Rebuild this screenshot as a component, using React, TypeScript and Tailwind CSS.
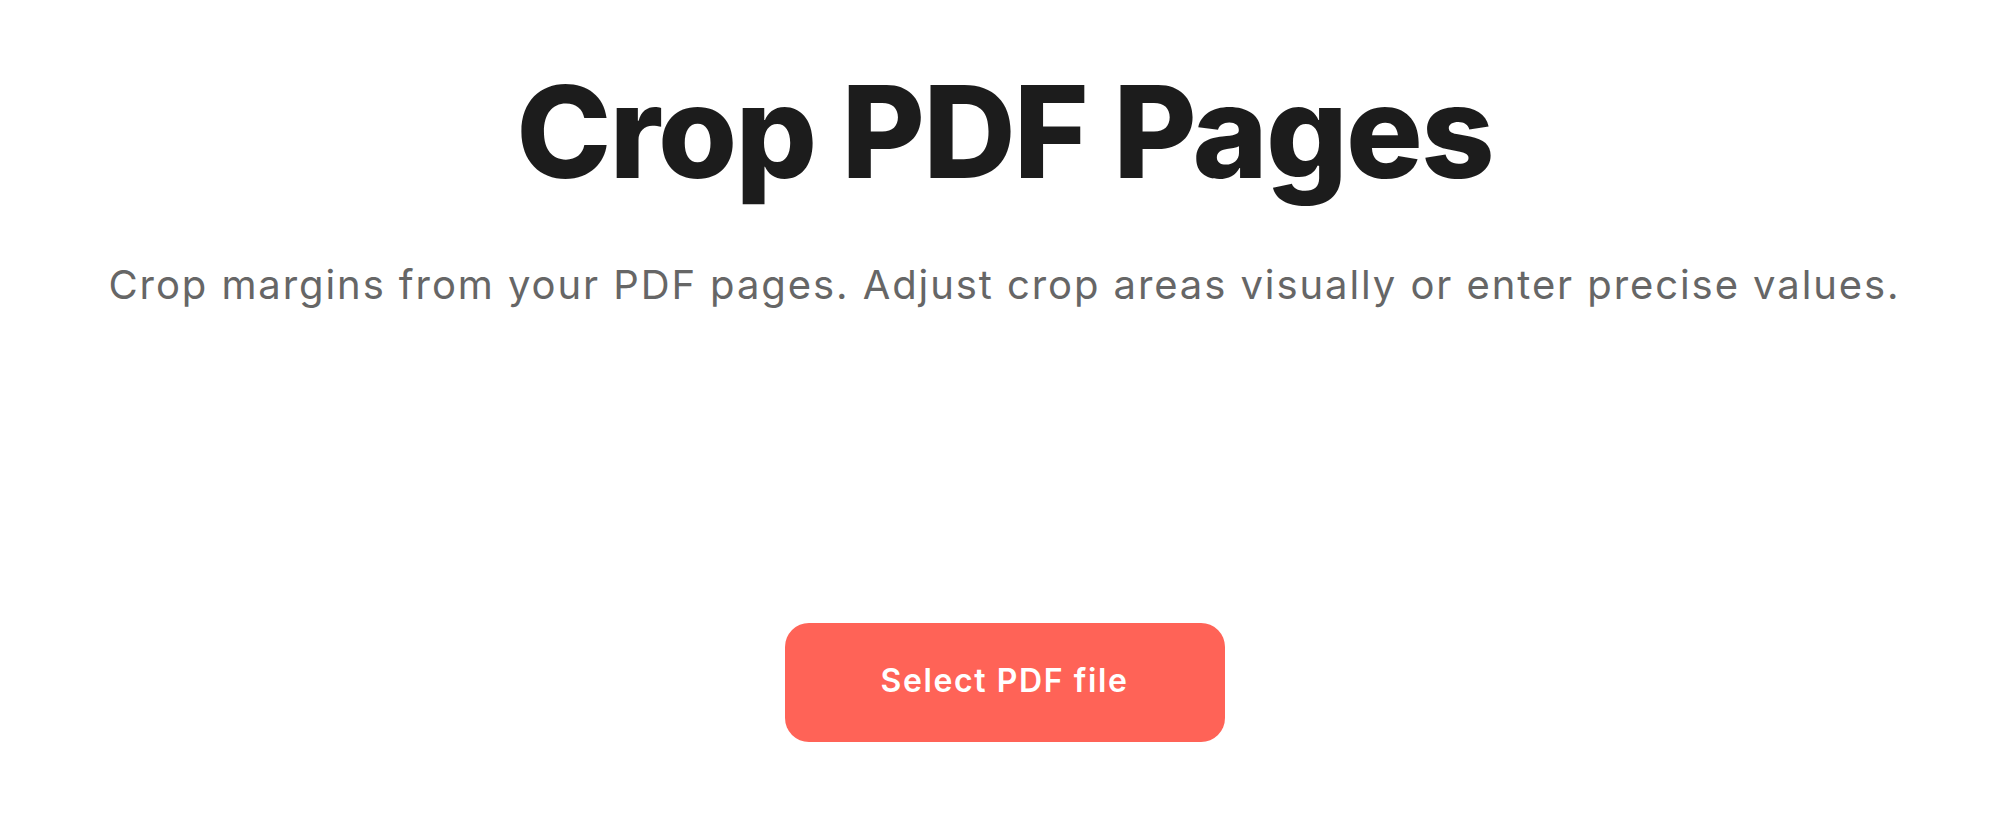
export default function App() {
  return (
    <div className="min-h-screen bg-white flex flex-col items-center" style={{ fontFamily: "Inter, sans-serif" }}>
      <h1 className="mt-[60px] text-[128px] leading-[144px] font-extrabold text-[#1c1c1c] tracking-[-0.014em]">
        Crop PDF Pages
      </h1>
      <p className="mt-[57px] text-[40px] leading-[48px] text-[#666666] tracking-[0.048em]">
        Crop margins from your PDF pages. Adjust crop areas visually or enter precise values.
      </p>
      <button className="mt-[314px] w-[440px] h-[119px] pb-[4px] rounded-[24px] bg-[#ff6357] text-white text-[32px] font-semibold tracking-[0.05em]">
        Select PDF file
      </button>
    </div>
  );
}
